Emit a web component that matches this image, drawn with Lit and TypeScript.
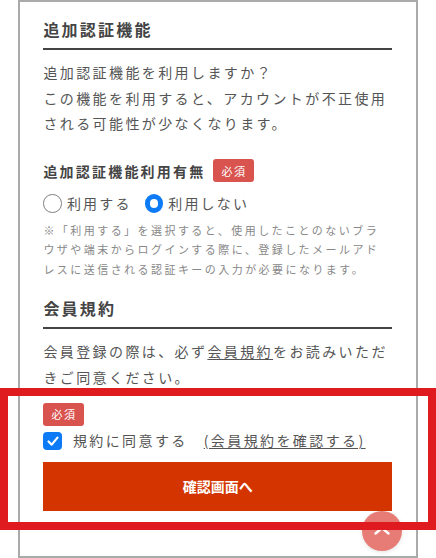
import { LitElement, html, css } from "lit";
import { customElement } from "lit/decorators.js";

@customElement("app-root")
export class AppRoot extends LitElement {
  static styles = css`
    :host {
      display: block;
      position: relative;
      width: 436px;
      height: 558px;
      overflow: hidden;
      background: #fff;
      font-family: "Noto Sans CJK JP", "Noto Sans", sans-serif;
      color: #444;
    }
    .frame {
      box-sizing: border-box;
      margin: 0 18px;
      height: 558px;
      border: 2px solid #aaa;
      padding: 14px 23.7px 0 23.4px;
    }
    h2 {
      margin: 0;
      font-size: 16px;
      line-height: 26px;
      height: 32px;
      font-weight: 700;
      letter-spacing: 2.2px;
      border-bottom: 2px solid #444;
      color: #444;
    }
    p {
      margin: 0;
      font-size: 14px;
      line-height: 25.5px;
      letter-spacing: 2.4px;
      color: #555;
    }
    .intro { margin-top: 10px; }
    .field-head {
      display: flex;
      align-items: center;
      gap: 8px;
      margin-top: 22px;
      font-size: 14px;
      font-weight: 700;
      letter-spacing: 2.2px;
      height: 24px;
    }
    .badge {
      display: inline-flex;
      align-items: center;
      justify-content: center;
      box-sizing: border-box;
      width: 41px;
      height: 23px;
      border-radius: 3px;
      background: #d9534f;
      color: #fff;
      font-size: 11px;
      font-weight: 400;
      letter-spacing: 1.5px;
    }
    .radios {
      display: flex;
      align-items: center;
      margin-top: 8px;
      height: 24px;
      font-size: 14px;
      letter-spacing: 2.2px;
      color: #555;
    }
    .radio { display: flex; align-items: center; gap: 5px; margin-right: 13px; }
    .dot {
      box-sizing: border-box;
      width: 18.5px;
      height: 18.5px;
      margin-top: 2px;
      border-radius: 50%;
      border: 1px solid #808080;
      background: #fff;
    }
    .dot.on { border: 5.5px solid #0d7bf5; }
    .note {
      margin-top: 6px;
      font-size: 11px;
      line-height: 19.8px;
      letter-spacing: 2.45px;
      color: #888;
    }
    .terms { margin-top: 15px; }
    .terms-text { margin-top: 9px; line-height: 26px; }
    a { color: inherit; text-decoration: underline; text-underline-offset: 2px; }
    .agree-badge { display: flex; margin-top: 13px; }
    .check-row {
      display: flex;
      align-items: center;
      margin-top: 2px;
      height: 24px;
      font-size: 14px;
      letter-spacing: 2.4px;
      color: #555;
    }
    .check {
      display: flex;
      align-items: center;
      justify-content: center;
      width: 18.5px;
      height: 18.5px;
      margin-top: 2px;
      border-radius: 4px;
      background: #0d7bf5;
      margin-right: 11px;
    }
    .check-row a { margin-left: 16px; }
    .submit {
      display: flex;
      align-items: center;
      justify-content: center;
      box-sizing: border-box;
      width: 100%;
      height: 49px;
      margin-top: 10px;
      border: 0;
      background: #d43500;
      color: #fff;
      font: inherit;
      font-size: 14px;
      font-weight: 700;
      letter-spacing: 0;
    }
    .fab {
      position: absolute;
      left: 362px;
      top: 511px;
      width: 40px;
      height: 40px;
      border-radius: 50%;
      background: #e77c76;
      box-shadow: 0 1px 4px rgba(0, 0, 0, 0.12);
      display: flex;
      align-items: center;
      justify-content: center;
    }
    .highlight {
      position: absolute;
      left: 0;
      top: 388px;
      width: 436px;
      height: 142px;
      box-sizing: border-box;
      border: 8px solid #df1b1f;
      pointer-events: none;
    }
  `;

  render() {
    return html`
      <div class="frame">
        <h2>追加認証機能</h2>
        <p class="intro">追加認証機能を利用しますか？<br />この機能を利用すると、アカウントが不正使用<br />される可能性が少なくなります。</p>
        <div class="field-head">追加認証機能利用有無<span class="badge">必須</span></div>
        <div class="radios">
          <label class="radio"><span class="dot"></span>利用する</label>
          <label class="radio"><span class="dot on"></span>利用しない</label>
        </div>
        <p class="note">※「利用する」を選択すると、使用したことのないブラウザや端末からログインする際に、登録したメールアドレスに送信される認証キーの入力が必要になります。</p>
        <h2 class="terms">会員規約</h2>
        <p class="terms-text">会員登録の際は、必ず<a>会員規約</a>をお読みいただきご同意ください。</p>
        <div class="agree-badge"><span class="badge">必須</span></div>
        <div class="check-row">
          <span class="check">
            <svg width="14" height="14" viewBox="0 0 14 14" fill="none"><path d="M2.5 7.5 L5.7 10.6 L11.5 3.6" stroke="#fff" stroke-width="2.2" stroke-linecap="round" stroke-linejoin="round"/></svg>
          </span>
          規約に同意する<a>(会員規約を確認する)</a>
        </div>
        <button class="submit">確認画面へ</button>
      </div>
      <div class="fab">
        <svg width="16" height="8" viewBox="0 0 16 8" fill="none"><path d="M1.5 6.5 L8 1 L14.5 6.5" stroke="#fff" stroke-width="2.4" stroke-linecap="round" stroke-linejoin="round"/></svg>
      </div>
      <div class="highlight"></div>
    `;
  }
}
